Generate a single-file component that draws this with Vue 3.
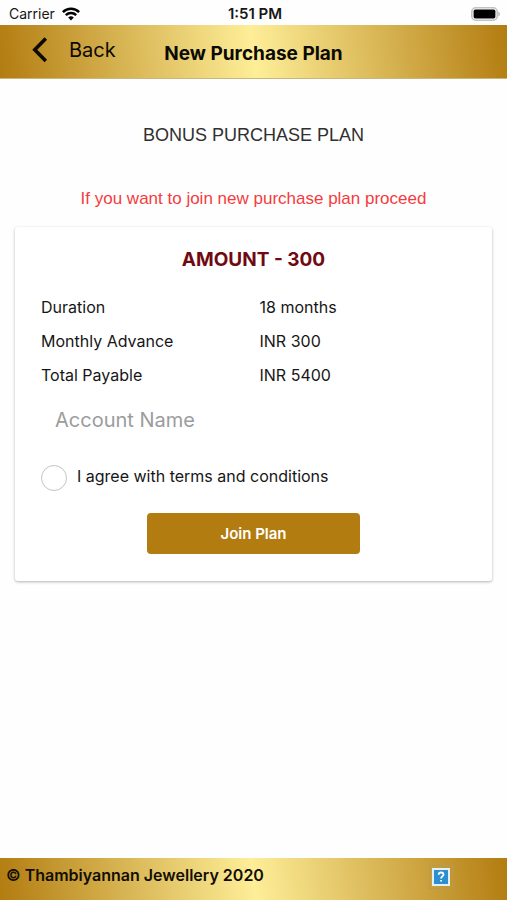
<script setup>
import { ref } from 'vue'

const accountName = ref('')
const agreed = ref(false)
const details = [
  { label: 'Duration', value: '18 months' },
  { label: 'Monthly Advance', value: 'INR 300' },
  { label: 'Total Payable', value: 'INR 5400' },
]
</script>

<template>
  <div class="screen">
    <div class="status">
      <div class="carrier">
        <span>Carrier</span>
        <svg class="wifi" viewBox="0 0 18 14" aria-hidden="true">
          <path d="M0.9 5.1a11.6 11.6 0 0 1 16.2 0" />
          <path d="M3.8 8.2a7.5 7.5 0 0 1 10.4 0" />
          <path class="dot" d="M6.2 10.5a4.2 4.2 0 0 1 5.6 0L9 13.6z" />
        </svg>
      </div>
      <span class="time">1:51 PM</span>
      <svg class="battery" viewBox="0 0 30 14" aria-hidden="true">
        <rect class="shell" x="0.8" y="0.8" width="25.4" height="12.4" rx="4" />
        <rect x="2.6" y="2.6" width="21.8" height="8.8" rx="1.6" />
        <path class="tip" d="M27.4 4.4q3.2 2.6 0 5.2z" />
      </svg>
    </div>

    <header class="bar gold">
      <button class="back" type="button">
        <svg viewBox="0 0 16 26" aria-hidden="true"><path d="M13.8 1.6 2.8 12.8l11 11.2" /></svg>
        <span>Back</span>
      </button>
      <h1>New Purchase Plan</h1>
    </header>

    <main>
      <h2>BONUS PURCHASE PLAN</h2>
      <p class="notice">If you want to join new purchase plan proceed</p>

      <form class="card" @submit.prevent>
        <h3>AMOUNT - 300</h3>
        <dl>
          <template v-for="item in details" :key="item.label">
            <dt>{{ item.label }}</dt>
            <dd>{{ item.value }}</dd>
          </template>
        </dl>
        <input v-model="accountName" class="account" type="text" placeholder="Account Name" aria-label="Account Name" />
        <label class="agree">
          <input v-model="agreed" type="checkbox" />
          <span>I agree with terms and conditions</span>
        </label>
        <button class="join" type="submit">Join Plan</button>
      </form>
    </main>

    <footer class="gold">
      <span>© Thambiyannan Jewellery 2020</span>
      <svg viewBox="0 0 24 24" aria-hidden="true">
        <rect class="halo" x="0.5" y="0.5" width="23" height="23" />
        <rect class="frame" x="3" y="3" width="18" height="18" />
        <rect class="tile" x="5" y="5" width="14" height="14" />
        <path d="M9.7 9.8q0-2.3 2.4-2.3t2.4 2.1c0 1.7-2.4 1.8-2.4 3.8" />
        <path d="M12.1 15v1.6" />
      </svg>
    </footer>
  </div>
</template>

<style>
body {
  margin: 0;
  background: #fff;
}
</style>

<style scoped>
.screen {
  display: flex;
  flex-direction: column;
  min-height: 100vh;
  background: #fefefe;
  color: #161616;
  font-family: Inter, "Liberation Sans", sans-serif;
  font-size: 16px;
}
h1, h2, h3, p, dl, dd {
  margin: 0;
}
button, input {
  font-family: inherit;
}
.gold {
  background: linear-gradient(82deg, #b27c10 0%, #feee98 50%, #b27c10 100%);
}
.status {
  display: grid;
  grid-template-columns: 1fr auto 1fr;
  align-items: center;
  height: 25px;
  padding: 2px 6px 0 9px;
  box-sizing: border-box;
  font-size: 14px;
}
.carrier {
  display: flex;
  align-items: center;
  gap: 7px;
}
.time {
  font-weight: 600;
  font-size: 15px;
}
.wifi {
  width: 18px;
  height: 14px;
  fill: none;
  stroke: #000;
  stroke-width: 2.5;
}
.wifi .dot {
  fill: #000;
  stroke: none;
}
.battery {
  width: 30px;
  height: 14px;
  justify-self: end;
}
.battery .shell {
  fill: #fff;
  stroke: #c2c2c2;
  stroke-width: 1.6;
}
.battery .tip {
  fill: #b4b4b4;
}
.bar {
  display: grid;
  grid-template-columns: 1fr auto 1fr;
  align-items: center;
  height: 54px;
  box-sizing: border-box;
  border-bottom: 1px solid #c9b67c;
  color: #0c0a04;
}
.back {
  display: flex;
  align-items: center;
  gap: 21px;
  padding: 0 0 4px 32px;
  border: 0;
  background: none;
  color: inherit;
  font-size: 20px;
}
.back svg {
  width: 16px;
  height: 26px;
  fill: none;
  stroke: currentColor;
  stroke-width: 3.6;
}
h1 {
  padding-top: 3px;
  font-size: 19px;
  font-weight: 700;
}
main {
  flex: 1;
  padding: 44px 15px 24px;
}
h2 {
  color: #303030;
  font-family: "Liberation Sans", Arial, sans-serif;
  font-size: 18px;
  line-height: 24px;
  font-weight: 300;
  text-align: center;
}
.notice {
  margin-top: 40px;
  color: #f53b3f;
  font-family: "Liberation Sans", Arial, sans-serif;
  font-size: 17px;
  line-height: 24px;
  font-weight: 300;
  text-align: center;
}
.card {
  display: flex;
  flex-direction: column;
  margin-top: 16px;
  padding: 21px 26px 27px;
  border-radius: 3px;
  background: #fff;
  box-shadow: 0 1px 3px rgba(0, 0, 0, 0.3);
}
h3 {
  color: #700a10;
  font-size: 19px;
  line-height: 24px;
  font-weight: 700;
  text-align: center;
}
dl {
  display: grid;
  grid-template-columns: 1fr 1fr;
  gap: 10px 12px;
  margin-top: 23px;
  line-height: 24px;
}
.account {
  height: 40px;
  margin-top: 13px;
  padding: 0 14px;
  border: 0;
  outline: 0;
  background: none;
  font-size: 20px;
}
.account::placeholder {
  color: #9c9c9c;
  opacity: 1;
}
.agree {
  display: flex;
  align-items: center;
  gap: 10px;
  margin-top: 25px;
}
.agree input {
  appearance: none;
  width: 26px;
  height: 26px;
  margin: 0;
  border: 1px solid #c4c4c4;
  border-radius: 50%;
}
.agree input:checked {
  background: #b27c10;
}
.agree span {
  padding-bottom: 4px;
}
.join {
  align-self: center;
  width: 50%;
  height: 41px;
  margin-top: 22px;
  border: 0;
  border-radius: 4px;
  background: #b27c10;
  color: #fff;
  font-size: 15px;
  font-weight: 600;
}
footer {
  display: flex;
  align-items: center;
  justify-content: space-between;
  height: 42px;
  padding: 0 54px 4px 6px;
  box-sizing: border-box;
  color: #120e04;
  font-size: 16px;
  font-weight: 600;
}
footer span {
  padding-bottom: 4px;
}
footer svg {
  width: 24px;
  height: 24px;
  fill: none;
  stroke: #fff;
  stroke-width: 1.8;
}
footer svg .halo {
  stroke: #b59a58;
  stroke-width: 1;
}
footer svg .frame {
  fill: #e2f1f8;
  stroke: none;
}
footer svg .tile {
  fill: #2c8fd0;
  stroke: none;
}
</style>
